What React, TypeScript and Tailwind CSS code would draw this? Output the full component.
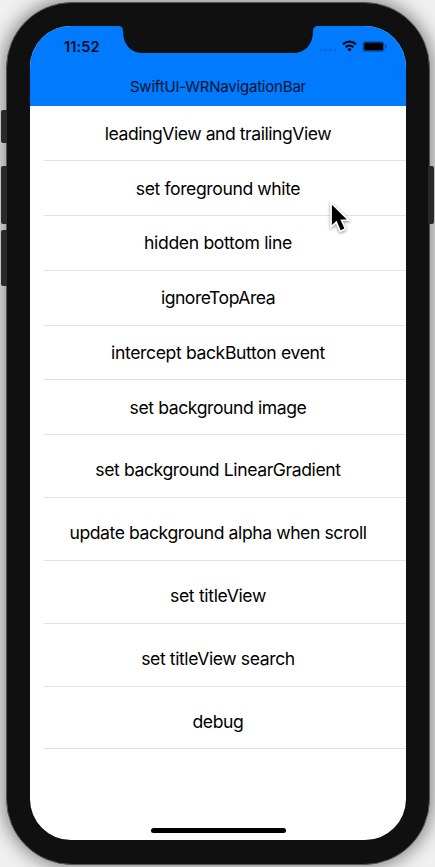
type Item = { title: string; row: string; tracking: string };

const items: Item[] = [
  { title: 'leadingView and trailingView', row: 'h-[55px] pt-[3px]', tracking: 'tracking-[-0.46px]' },
  { title: 'set foreground white', row: 'h-[55px] pt-[3px]', tracking: 'tracking-[-0.4px]' },
  { title: 'hidden bottom line', row: 'h-[55px] pt-px', tracking: 'tracking-[-0.34px]' },
  { title: 'ignoreTopArea', row: 'h-[55px] pt-px', tracking: 'tracking-[-0.5px]' },
  { title: 'intercept backButton event', row: 'h-[54px] pt-px', tracking: 'tracking-[-0.38px]' },
  { title: 'set background image', row: 'h-[55px] pt-[3px]', tracking: 'tracking-[-0.42px]' },
  { title: 'set background LinearGradient', row: 'h-[63px] pt-[9px]', tracking: 'tracking-[-0.41px]' },
  { title: 'update background alpha when scroll', row: 'h-[63px] pt-[9px]', tracking: 'tracking-[-0.43px]' },
  { title: 'set titleView', row: 'h-[63px] pt-[9px]', tracking: 'tracking-[-0.33px]' },
  { title: 'set titleView search', row: 'h-[63px] pt-[9px]', tracking: 'tracking-[-0.4px]' },
  { title: 'debug', row: 'h-[62px] pt-[9px]', tracking: 'tracking-[-0.4px]' },
];

function StatusIcons() {
  return (
    <svg width="76" height="18" viewBox="316 38 76 18">
      <g fill="#0058bd">
        <circle cx="321.3" cy="50" r="1.1" />
        <circle cx="325.8" cy="50" r="1.1" />
        <circle cx="330.3" cy="50" r="1.1" />
        <circle cx="334.8" cy="50" r="1.1" />
      </g>
      <g fill="none" stroke="#000a1c" strokeWidth="2.2">
        <path d="M343 44.4a9.2 9.2 0 0 1 13 0" />
        <path d="M345.6 47.3a5.5 5.5 0 0 1 7.8 0" />
      </g>
      <path d="M349.5 51.5l-2.1-2.1a3 3 0 0 1 4.2 0z" fill="#000a1c" />
      <rect x="362.6" y="41.2" width="21.8" height="10.6" rx="3" fill="#0050b0" />
      <rect x="364.2" y="42.7" width="18.8" height="7.6" rx="1.6" fill="#000" />
      <path d="M385.2 44.6q1.7.6 1.7 2t-1.7 2z" fill="#0046a0" />
    </svg>
  );
}

function Pointer() {
  return (
    <svg
      className="absolute left-[326px] top-[197px] drop-shadow-[0_1px_1.5px_rgba(0,0,0,0.45)]"
      width="28"
      height="40"
      viewBox="326 197 28 40"
    >
      <path
        d="M331.9 204.7v20.4l4.7-4.3 4 9.4 3.8-1.6-4-9.2h6.4z"
        fill="#000"
        stroke="#fff"
        strokeWidth="3.4"
        paintOrder="stroke"
      />
    </svg>
  );
}

function Notch() {
  return (
    <svg className="absolute left-[88px] top-0" width="200" height="27" viewBox="118 26 200 27">
      <path d="M118 26q5 0 5 5c0 14 8 22 20 22h150c12 0 20-8 20-22q0-5 5-5z" fill="#101010" />
    </svg>
  );
}

export default function App() {
  return (
    <div className="relative flex h-[867px] w-[435px] overflow-hidden bg-[#f0f0f0] pt-[2px] font-['Inter',sans-serif] text-black">
      <div className="z-10 flex w-[7px] shrink-0 flex-col items-end pt-[108px]">
        <div className="h-[33px] w-[6px] rounded-l-[2px] bg-[#292929]" />
        <div className="mt-[23px] h-[58px] w-[6px] rounded-l-[2px] bg-[#292929]" />
        <div className="mt-[6px] h-[56px] w-[6px] rounded-l-[2px] bg-[#292929]" />
      </div>
      <div className="-ml-px h-[863px] w-[424px] shrink-0 rounded-[66px] border border-[#555555] bg-[#101010] px-[23px] pt-[23px] shadow-[0_0_18px_3px_rgba(0,0,0,0.45)]">
        <main className="flex h-[814px] w-[376px] flex-col overflow-hidden rounded-[41px] bg-white">
          <header className="relative flex h-[80px] shrink-0 flex-col bg-[#007aff] text-[#00132b]">
            <div className="flex h-[42px] items-center justify-between pl-[34px] pr-[14px] text-[14.5px] font-semibold text-[#000a1c]">
              <span className="tracking-[0.1px]">11:52</span>
              <StatusIcons />
            </div>
            <h1 className="flex h-[38px] items-center justify-center text-[15px] tracking-[-0.2px]">
              SwiftUI-WRNavigationBar
            </h1>
            <Notch />
          </header>
          <ul className="flex flex-col pl-[14px]">
            {items.map((item) => (
              <li
                key={item.title}
                className={`${item.row} flex items-center justify-center border-b border-[#e2e2e2] pr-[14px] text-[17.6px]`}
              >
                <span className={item.tracking}>{item.title}</span>
              </li>
            ))}
          </ul>
          <div className="mx-auto mb-[7px] mt-auto h-[5px] w-[135px] rounded-full bg-black" />
        </main>
      </div>
      <div className="z-10 -ml-[2px] flex w-[7px] shrink-0 flex-col pt-[164px]">
        <div className="h-[58px] w-[6px] rounded-r-[2px] bg-[#292929]" />
      </div>
      <Pointer />
    </div>
  );
}
